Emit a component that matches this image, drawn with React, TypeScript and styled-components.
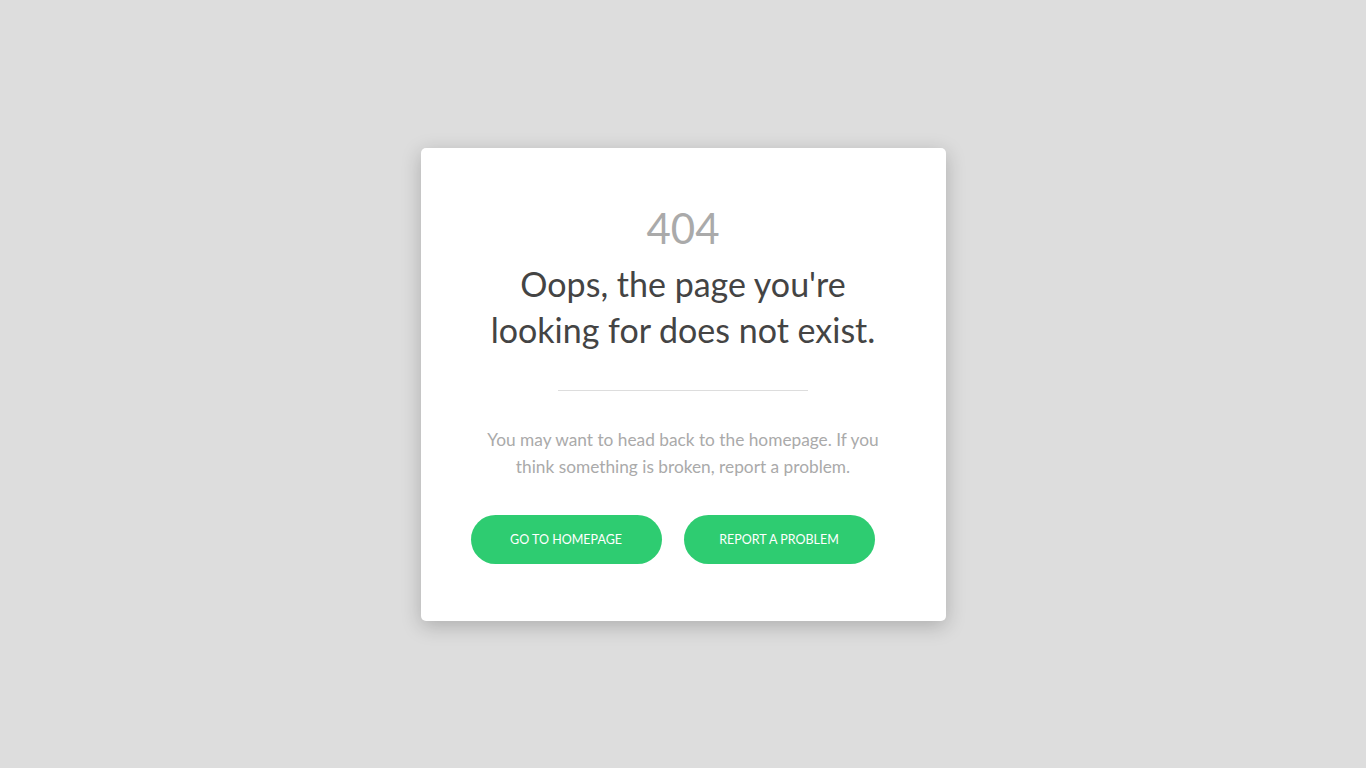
import React from "react";
import styled, { createGlobalStyle } from "styled-components";

const GlobalStyle = createGlobalStyle`
  html, body {
    margin: 0;
    padding: 0;
    height: 100%;
    background: #dddddd;
  }
  body {
    font-family: Lato, "Liberation Sans", sans-serif;
  }
`;

const Page = styled.div`
  min-height: 100vh;
  display: flex;
  align-items: center;
  justify-content: center;
`;

const Card = styled.div`
  width: 525px;
  box-sizing: border-box;
  padding: 50px 50px 57px;
  background: #ffffff;
  border-radius: 5px;
  box-shadow: 0 5px 20px rgba(0, 0, 0, 0.22);
  text-align: center;
`;

const Code = styled.div`
  font-size: 42px;
  line-height: 46px;
  color: #aaaaaa;
  margin-top: 7px;
`;

const Title = styled.h1`
  font-weight: 400;
  font-size: 34px;
  line-height: 46px;
  color: #444444;
  margin: 10px 0 0;
`;

const Divider = styled.hr`
  width: 250px;
  border: 0;
  border-top: 1px solid #dddddd;
  margin: 37px auto 35px;
`;

const Text = styled.p`
  font-size: 17.3px;
  line-height: 27px;
  color: #aaaaaa;
  margin: 0;
`;

const Actions = styled.div`
  margin-top: 35px;
  display: flex;
  gap: 22px;
`;

const Button = styled.a`
  width: 191px;
  height: 49px;
  border-radius: 25px;
  background: #2ecc71;
  color: #ffffff;
  font-size: 12.5px;
  text-transform: uppercase;
  text-decoration: none;
  display: flex;
  align-items: center;
  justify-content: center;
`;

export default function App() {
  return (
    <>
      <GlobalStyle />
      <Page>
        <Card>
          <Code>404</Code>
          <Title>
            Oops, the page you're
            <br />
            looking for does not exist.
          </Title>
          <Divider />
          <Text>
            You may want to head back to the homepage. If you think something
            is broken, report a problem.
          </Text>
          <Actions>
            <Button href="#">Go to homepage</Button>
            <Button href="#">Report a problem</Button>
          </Actions>
        </Card>
      </Page>
    </>
  );
}
